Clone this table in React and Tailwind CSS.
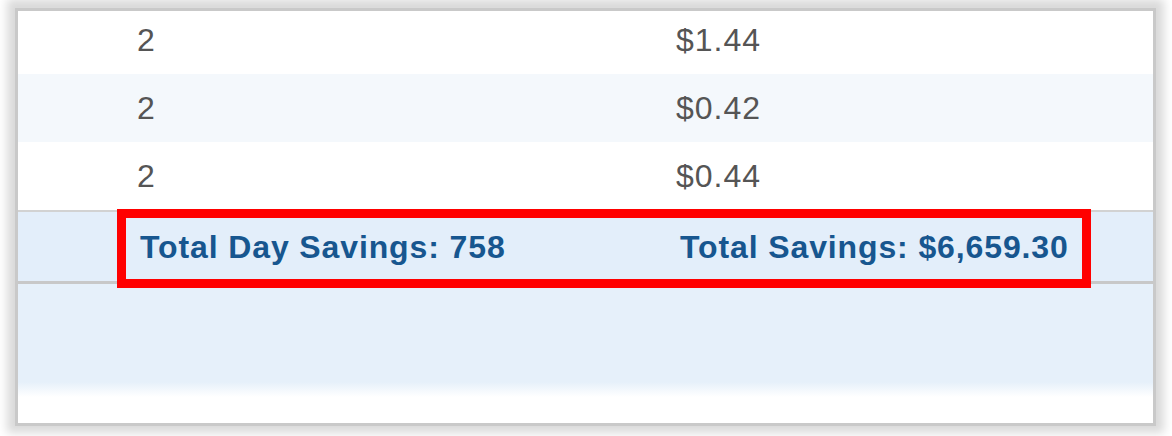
import React from 'react';

const rows = [
  { days: 2, savings: '$1.44' },
  { days: 2, savings: '$0.42' },
  { days: 2, savings: '$0.44' },
];

export default function App() {
  return (
    <div className="w-[1172px] h-[436px] bg-white overflow-hidden pl-[15px] pt-[8px]" style={{ fontFamily: '"Liberation Sans", Arial, sans-serif' }}>
      <div className="relative w-[1141px] h-[418px] bg-white border-[3px] border-[#c9c9c9] overflow-hidden shadow-[0_-1px_9px_8px_rgba(0,0,0,0.15)]">
        {/* Savings rows */}
        <div className="-mt-[5px]">
          {rows.map((row, i) => (
            <div
              key={i}
              className={`grid grid-cols-[658px_1fr] h-[68px] items-center text-[32px] tracking-[1px] text-[#555555] ${i % 2 === 1 ? 'bg-[#f4f8fc]' : 'bg-white'}`}
            >
              <div className="pl-[119px]">{row.days}</div>
              <div>{row.savings}</div>
            </div>
          ))}
        </div>

        {/* Totals */}
        <div className="relative">
          <div className="h-[2px] bg-[#d2d2d2]" />
          <div className="grid grid-cols-[658px_1fr] h-[69px] items-center bg-[#e3eefa] text-[32px] font-bold tracking-[0.88px] text-[#17568f]">
            <div className="pl-[122px]">Total Day Savings: 758</div>
            <div className="pl-[4px]">Total Savings: $6,659.30</div>
          </div>
          <div className="h-[3px] bg-[#c8c8c8]" />
          <div className="absolute left-[99px] top-[-1px] w-[974px] h-[79px] border-[9px] border-[#ff0000]" />
        </div>

        {/* Footer band */}
        <div className="h-[98px] bg-[#e6f0fa]" />
        <div className="h-[15px] bg-gradient-to-b from-[#e6f0fa] to-white" />
      </div>
    </div>
  );
}
